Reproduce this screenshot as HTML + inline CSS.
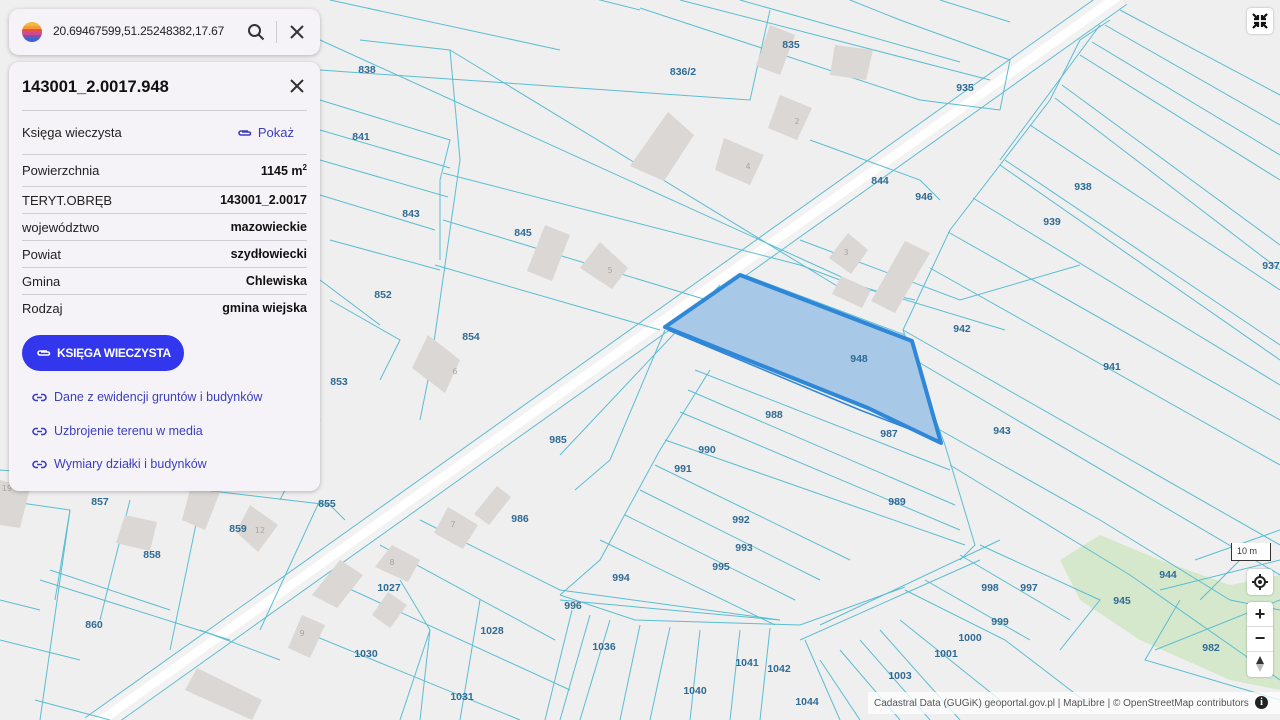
<!DOCTYPE html>
<html><head><meta charset="utf-8">
<style>
*{margin:0;padding:0;box-sizing:border-box}
body{width:1280px;height:720px;overflow:hidden;position:relative;background:#efefef;font-family:"Liberation Sans",sans-serif}
svg.map{position:absolute;left:0;top:0}
.lbl{font:bold 10.5px "Liberation Sans",sans-serif;fill:#2f6b95;text-anchor:middle}
.bn{font:8px "DejaVu Sans",sans-serif;fill:#a9a5a2;text-anchor:middle}
.search{position:absolute;left:9px;top:9px;width:311px;height:46px;background:#f6f3f8;border-radius:10px;box-shadow:0 1px 4px rgba(0,0,0,.25)}
.card{position:absolute;left:9px;top:62px;width:311px;height:429px;background:#f6f3f8;border-radius:10px;box-shadow:0 1px 4px rgba(0,0,0,.25)}
.row{position:absolute;left:13px;width:285px;font-size:13px;color:#222;display:flex;justify-content:space-between;align-items:center;border-top:1px solid #cfcdd2}
.row b{font-weight:bold;font-size:12.5px;color:#111}
.lnk{position:absolute;left:23px;font-size:12.5px;color:#3a3fbf;display:flex;align-items:center;gap:7px}
</style></head><body>
<svg class="map" width="1280" height="720" viewBox="0 0 1280 720">
<path d="M1060 560 L1100 535 L1160 560 L1230 585 L1280 575 L1280 690 L1230 680 L1140 640 L1080 600 Z" fill="#d5e8cc"/>
<path d="M1120 -5 L92 727" stroke="#60bcd2" stroke-width="24"/>
<path d="M1120 -5 L92 727" stroke="#f2f2f2" stroke-width="22"/>
<path d="M1120 -5 L92 727" stroke="#ffffff" stroke-width="9"/>
<g stroke="#5bbdd3" stroke-width="1" fill="none">
<path d="M320 40 L870 290 L915 300"/>
<path d="M320 70 L750 100 L770 10"/>
<path d="M330 0 L560 50"/>
<path d="M580 -5 L640 10"/>
<path d="M640 8 L920 100 L1000 110"/>
<path d="M680 0 L990 80"/>
<path d="M740 0 L960 62"/>
<path d="M320 100 L450 140 L440 180 L440 260"/>
<path d="M320 130 L450 168"/>
<path d="M320 160 L448 197"/>
<path d="M320 195 L435 230"/>
<path d="M360 40 L450 50 L460 160 L430 370 L420 420"/>
<path d="M450 50 L860 300"/>
<path d="M443 173 L800 265 L840 280 L1005 330"/>
<path d="M443 220 L740 310"/>
<path d="M435 265 L660 330"/>
<path d="M330 240 L440 270"/>
<path d="M330 300 L400 340 L380 380"/>
<path d="M320 280 L380 325"/>
<path d="M810 140 L920 180 L940 200"/>
<path d="M850 0 L900 20 L1010 60 L1000 110"/>
<path d="M940 0 L1010 22"/>
<path d="M800 240 L960 300 L1080 265"/>
<path d="M745 275 L905 335"/>
<path d="M665 330 L610 460 L575 490"/>
<path d="M720 285 L560 455"/>
<path d="M1110 20 L1080 40 L1050 100 L950 230 L903 330 L945 445 L975 545 L960 560"/>
<path d="M1100 25 L1000 160"/>
<path d="M1120 10 L1280 95"/>
<path d="M1105 25 L1280 125"/>
<path d="M1092 42 L1280 155"/>
<path d="M1080 55 L1280 180"/>
<path d="M1062 85 L1280 245"/>
<path d="M1055 98 L1280 270"/>
<path d="M1030 125 L1280 290"/>
<path d="M1005 160 L1280 345"/>
<path d="M1000 165 L1280 360"/>
<path d="M973 198 L1280 385"/>
<path d="M948 232 L1280 420"/>
<path d="M930 268 L1280 465"/>
<path d="M903 330 L1280 545"/>
<path d="M915 360 L1280 575"/>
<path d="M940 430 L1100 520 L1230 600 L1280 610"/>
<path d="M950 465 L1130 575 L1280 680"/>
<path d="M1195 560 L1280 530"/>
<path d="M1160 590 L1280 560"/>
<path d="M1155 650 L1280 600"/>
<path d="M1180 600 L1145 660 L1280 700"/>
<path d="M1240 560 L1200 600"/>
<path d="M695 370 L950 470"/>
<path d="M688 390 L955 505"/>
<path d="M680 412 L960 530"/>
<path d="M665 440 L965 545"/>
<path d="M655 465 L850 560"/>
<path d="M640 490 L820 580"/>
<path d="M625 515 L795 600"/>
<path d="M600 540 L775 625"/>
<path d="M710 370 L660 450 L600 560 L560 595"/>
<path d="M560 595 L635 620 L800 625 L905 587"/>
<path d="M820 625 L1000 540"/>
<path d="M800 640 L980 560"/>
<path d="M905 590 L1005 640 L1090 705"/>
<path d="M925 580 L1030 640"/>
<path d="M960 555 L1070 620"/>
<path d="M980 545 L1100 600 L1060 650"/>
<path d="M900 620 L1000 700"/>
<path d="M880 630 L960 720"/>
<path d="M860 640 L930 720"/>
<path d="M840 650 L900 720"/>
<path d="M820 660 L860 720"/>
<path d="M805 640 L840 720"/>
<path d="M560 600 L780 620"/>
<path d="M572 610 L545 720"/>
<path d="M590 615 L560 720"/>
<path d="M610 620 L580 720"/>
<path d="M640 625 L620 720"/>
<path d="M670 627 L650 720"/>
<path d="M700 630 L690 720"/>
<path d="M740 630 L730 720"/>
<path d="M770 628 L760 720"/>
<path d="M420 520 L560 590 L780 620"/>
<path d="M380 545 L555 640"/>
<path d="M330 580 L570 690"/>
<path d="M300 630 L520 720"/>
<path d="M400 580 L430 630 L420 720"/>
<path d="M480 600 L460 720"/>
<path d="M430 630 L400 720"/>
<path d="M0 470 L120 480 L330 505 L345 520"/>
<path d="M0 500 L70 510 L40 720"/>
<path d="M70 510 L55 600"/>
<path d="M130 500 L100 620"/>
<path d="M200 505 L170 650"/>
<path d="M50 570 L170 610"/>
<path d="M0 600 L40 610"/>
<path d="M35 700 L110 720"/>
<path d="M0 640 L80 660"/>
<path d="M40 580 L230 640"/>
<path d="M320 500 L260 630"/>
<path d="M320 420 L280 500"/>
<path d="M200 630 L280 660"/>
</g>
<g fill="#dad7d4">
<path d="M770 25 L795 35 L780 75 L756 66Z"/>
<path d="M835 45 L873 50 L866 80 L830 75Z"/>
<path d="M780 95 L812 108 L797 140 L768 128Z"/>
<path d="M668 112 L694 135 L664 181 L630 166Z"/>
<path d="M724 138 L764 155 L750 185 L715 170Z"/>
<path d="M545 225 L570 235 L552 281 L527 271Z"/>
<path d="M600 242 L628 268 L612 289 L580 268Z"/>
<path d="M428 335 L460 360 L445 393 L412 368Z"/>
<path d="M848 233 L868 250 L851 274 L829 258Z"/>
<path d="M841 276 L871 290 L862 308 L832 294Z"/>
<path d="M905 241 L930 253 L895 313 L871 301Z"/>
<path d="M448 507 L478 525 L463 549 L434 533Z"/>
<path d="M497 486 L511 497 L489 525 L474 514Z"/>
<path d="M392 545 L420 560 L408 582 L375 567Z"/>
<path d="M340 560 L363 575 L337 608 L312 595Z"/>
<path d="M388 592 L407 605 L390 628 L372 615Z"/>
<path d="M302 615 L325 625 L310 658 L288 648Z"/>
<path d="M197 668 L262 700 L252 720 L185 690Z"/>
<path d="M125 515 L157 522 L150 551 L116 543Z"/>
<path d="M250 505 L278 525 L258 552 L236 532Z"/>
<path d="M190 490 L220 492 L205 530 L182 520Z"/>
<path d="M0 480 L30 488 L20 528 L0 525Z"/>
</g>
<g class="bn"><text x="797" y="124">2</text><text x="748" y="169">4</text><text x="610" y="273">5</text><text x="455" y="374">6</text><text x="846" y="255">3</text><text x="453" y="527">7</text><text x="392" y="565">8</text><text x="302" y="636">9</text><text x="260" y="533">12</text><text x="7" y="491">19</text></g>
<path d="M665 327 L740 275 L912 341 L941 443 L868 408 Z" fill="#a8c8e8" stroke="#2f87d8" stroke-width="4" stroke-linejoin="round"/>
<path d="M668 330 L860 410 L938 440" stroke="#2f87d8" stroke-width="1.5" fill="none"/>
<g class="lbl">
<text x="791" y="48">835</text><text x="683" y="75">836/2</text><text x="367" y="73">838</text><text x="361" y="140">841</text><text x="411" y="217">843</text><text x="880" y="184">844</text><text x="523" y="236">845</text><text x="383" y="298">852</text><text x="471" y="340">854</text><text x="339" y="385">853</text><text x="924" y="200">946</text><text x="965" y="91">935</text><text x="1083" y="190">938</text><text x="1052" y="225">939</text><text x="1271" y="269">937</text><text x="962" y="332">942</text><text x="1112" y="370">941</text><text x="1002" y="434">943</text><text x="859" y="362">948</text><text x="774" y="418">988</text><text x="889" y="437">987</text><text x="707" y="453">990</text><text x="683" y="472">991</text><text x="897" y="505">989</text><text x="741" y="523">992</text><text x="744" y="551">993</text><text x="721" y="570">995</text><text x="621" y="581">994</text><text x="573" y="609">996</text><text x="558" y="443">985</text><text x="520" y="522">986</text><text x="990" y="591">998</text><text x="1029" y="591">997</text><text x="1000" y="625">999</text><text x="970" y="641">1000</text><text x="946" y="657">1001</text><text x="900" y="679">1003</text><text x="1168" y="578">944</text><text x="1122" y="604">945</text><text x="1211" y="651">982</text><text x="100" y="505">857</text><text x="152" y="558">858</text><text x="238" y="532">859</text><text x="327" y="507">855</text><text x="94" y="628">860</text><text x="389" y="591">1027</text><text x="492" y="634">1028</text><text x="366" y="657">1030</text><text x="462" y="700">1031</text><text x="604" y="650">1036</text><text x="747" y="666">1041</text><text x="779" y="672">1042</text><text x="695" y="694">1040</text><text x="807" y="705">1044</text>
</g>
</svg>

<div style="position:absolute;left:868px;top:692px;width:412px;height:22px;background:rgba(255,255,255,.75);font-size:10px;color:#555;display:flex;align-items:center;padding-left:6px;white-space:nowrap">Cadastral Data (GUGiK) geoportal.gov.pl | MapLibre | © OpenStreetMap contributors
<span style="position:absolute;right:12px;top:4px;width:13px;height:13px;border-radius:50%;background:#222;color:#fff;font:bold 10px 'Liberation Serif',serif;text-align:center;line-height:13px">i</span></div>

<div style="position:absolute;left:1247px;top:8px;width:26px;height:26px;background:#fff;border-radius:4px;box-shadow:0 0 2px rgba(0,0,0,.3)">
<svg width="26" height="26" viewBox="0 0 26 26" stroke="#111" stroke-width="2.2" fill="none"><path d="M6 6l5 5M11 7v4H7M20 6l-5 5M15 7v4h4M6 20l5-5M11 19v-4H7M20 20l-5-5M15 19v-4h4"/></svg></div>
<div style="position:absolute;left:1231px;top:543px;width:40px;height:18px;border:1.5px solid #333;border-top:none;background:#fff;font-size:9px;color:#333;padding:3px 0 0 5px">10 m</div>
<div style="position:absolute;left:1247px;top:569px;width:26px;height:26px;background:#fff;border-radius:4px;box-shadow:0 0 2px rgba(0,0,0,.3)">
<svg width="26" height="26" viewBox="0 0 26 26" fill="none" stroke="#222"><circle cx="13" cy="13" r="5" stroke-width="2"/><circle cx="13" cy="13" r="2" fill="#222" stroke="none"/><path d="M13 5v3M13 18v3M5 13h3M18 13h3" stroke-width="2"/></svg></div>
<div style="position:absolute;left:1247px;top:602px;width:26px;height:75px;background:#fff;border-radius:4px;box-shadow:0 0 2px rgba(0,0,0,.3)">
<div style="height:25px;border-bottom:1px solid #ddd;text-align:center;font:bold 18px 'Liberation Sans';line-height:25px;color:#222">+</div>
<div style="height:25px;border-bottom:1px solid #ddd;text-align:center;font:bold 18px 'Liberation Sans';line-height:23px;color:#222">−</div>
<svg width="26" height="24" viewBox="0 0 26 24"><path d="M13 4l-4 8h8z" fill="#333"/><path d="M13 20l-4-8h8z" fill="#bbb"/></svg></div>

<div class="search">
<svg style="position:absolute;left:13px;top:13px" width="20" height="20" viewBox="0 0 20 20"><clipPath id="c"><circle cx="10" cy="10" r="10"/></clipPath><g clip-path="url(#c)"><rect y="0" width="20" height="4" fill="#f6b73c"/><rect y="4" width="20" height="3" fill="#f39a3a"/><rect y="7" width="20" height="3" fill="#e9503f"/><rect y="10" width="20" height="3" fill="#d04a8a"/><rect y="13" width="20" height="3" fill="#7a4fbf"/><rect y="16" width="20" height="4" fill="#3f63c8"/></g></svg>
<div style="position:absolute;left:44px;top:15px;font-size:12px;color:#222;letter-spacing:-0.2px">20.69467599,51.25248382,17.67</div>
<svg style="position:absolute;left:238px;top:14px" width="18" height="18" viewBox="0 0 18 18" fill="none" stroke="#333" stroke-width="2"><circle cx="7.5" cy="7.5" r="5.5"/><path d="M11.5 11.5l5 5"/></svg>
<div style="position:absolute;left:267px;top:12px;width:1px;height:22px;background:#ccc"></div>
<svg style="position:absolute;left:281px;top:16px" width="14" height="14" viewBox="0 0 14 14" stroke="#333" stroke-width="2"><path d="M1 1l12 12M13 1L1 13"/></svg>
</div>

<div class="card">
<div style="position:absolute;left:13px;top:16px;font-size:16.5px;font-weight:bold;color:#111">143001_2.0017.948</div>
<svg style="position:absolute;left:281px;top:17px" width="14" height="14" viewBox="0 0 14 14" stroke="#333" stroke-width="2"><path d="M1 1l12 12M13 1L1 13"/></svg>
<div class="row" style="top:48px;height:44px">Księga wieczysta<span style="color:#3a3fbf;font-size:13px;margin-right:13px;display:flex;align-items:center;gap:6px"><svg width="15" height="8" viewBox="0 0 15 8" fill="none" stroke="#3a3fbf" stroke-width="1.6"><path d="M11 2H4a2 2 0 000 4h8a1.5 1.5 0 000-3H5"/></svg>Pokaż</span></div>
<div class="row" style="top:92px;height:32px">Powierzchnia<b>1145 m<sup style="font-size:8px">2</sup></b></div>
<div class="row" style="top:124px;height:27px">TERYT.OBRĘB<b>143001_2.0017</b></div>
<div class="row" style="top:151px;height:27px">województwo<b>mazowieckie</b></div>
<div class="row" style="top:178px;height:27px">Powiat<b>szydłowiecki</b></div>
<div class="row" style="top:205px;height:27px">Gmina<b>Chlewiska</b></div>
<div class="row" style="top:232px;height:27px">Rodzaj<b>gmina wiejska</b></div>
<div style="position:absolute;left:13px;top:273px;width:162px;height:36px;border-radius:18px;background:#3237ee;color:#fff;font-size:12px;font-weight:bold;display:flex;align-items:center;padding-left:14px;gap:6px;white-space:nowrap;letter-spacing:-0.3px"><svg width="15" height="8" viewBox="0 0 15 8" fill="none" stroke="#fff" stroke-width="1.6"><path d="M11 2H4a2 2 0 000 4h8a1.5 1.5 0 000-3H5"/></svg>KSIĘGA WIECZYSTA</div>
<div class="lnk" style="top:328px"><svg width="15" height="9" viewBox="0 0 15 9" fill="none" stroke="#3a3fbf" stroke-width="1.6"><path d="M6 1.5H4a3 3 0 000 6h2M9 1.5h2a3 3 0 010 6H9M5 4.5h5"/></svg>Dane z ewidencji gruntów i budynków</div>
<div class="lnk" style="top:362px"><svg width="15" height="9" viewBox="0 0 15 9" fill="none" stroke="#3a3fbf" stroke-width="1.6"><path d="M6 1.5H4a3 3 0 000 6h2M9 1.5h2a3 3 0 010 6H9M5 4.5h5"/></svg>Uzbrojenie terenu w media</div>
<div class="lnk" style="top:395px"><svg width="15" height="9" viewBox="0 0 15 9" fill="none" stroke="#3a3fbf" stroke-width="1.6"><path d="M6 1.5H4a3 3 0 000 6h2M9 1.5h2a3 3 0 010 6H9M5 4.5h5"/></svg>Wymiary działki i budynków</div>
</div>
</body></html>
